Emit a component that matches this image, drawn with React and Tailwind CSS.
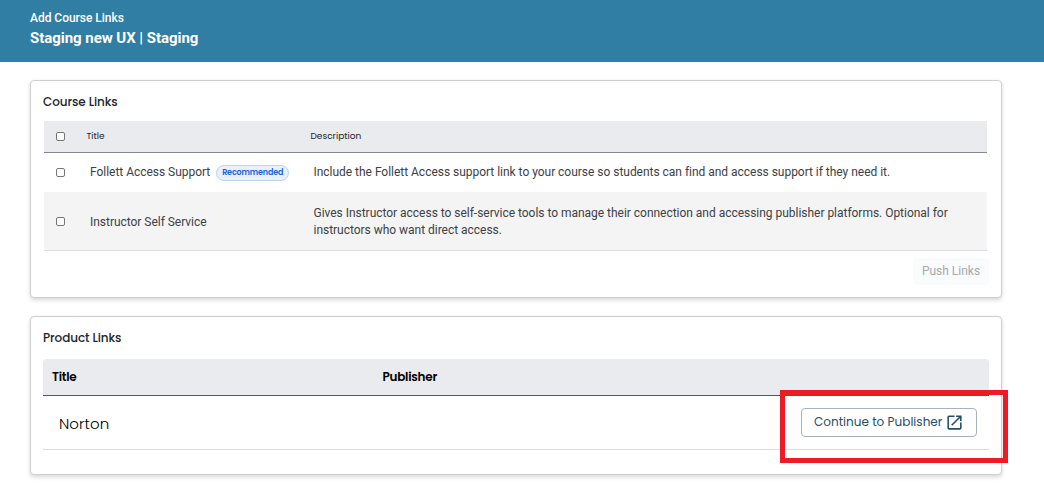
import { MdOpenInNew } from 'react-icons/md';

const courseLinks = [
  {
    title: 'Follett Access Support',
    recommended: true,
    description:
      'Include the Follett Access support link to your course so students can find and access support if they need it.',
    rowClass: 'h-[39px] bg-white',
    titleClass: '',
    textClass: '',
  },
  {
    title: 'Instructor Self Service',
    recommended: false,
    description:
      'Gives Instructor access to self-service tools to manage their connection and accessing publisher platforms. Optional for instructors who want direct access.',
    rowClass: 'h-[59px] bg-[#f4f4f4] border-b border-[#dcdde4]',
    titleClass: 'pt-0.5',
    textClass: 'pt-px',
  },
];

function Checkbox({ label }) {
  return (
    <input
      type="checkbox"
      aria-label={label}
      className="block w-[9px] h-[9px] ml-3 appearance-none rounded-[2px] border border-[#767676] bg-white"
    />
  );
}

function Card({ title, className, children }) {
  return (
    <section
      className={`w-[972px] rounded-[4px] border border-[#cfcfcf] bg-white pl-3 shadow-[0_2px_4px_rgba(0,0,0,0.16)] ${className}`}
    >
      <h2 className="h-10 pt-[11px] font-[Poppins,Inter,sans-serif] text-[12px] leading-5 font-medium tracking-[-0.08px] text-[#212529]">
        {title}
      </h2>
      {children}
    </section>
  );
}

export default function App() {
  return (
    <div className="relative w-[1044px] h-[486px] overflow-hidden bg-white font-[Roboto,sans-serif] text-[#3c4146]">
      <header className="h-[62px] bg-[#307ea3] pl-[30px] pt-[9px] text-white">
        <p className="text-[12px] leading-[18px] font-medium tracking-[-0.03px]">Add Course Links</p>
        <h1 className="text-[15px] leading-[22px] font-bold tracking-[-0.04px]">Staging new UX | Staging</h1>
      </header>

      <main className="flex flex-col gap-[18px] pl-[30px] pt-[18px]">
        <Card title="Course Links" className="h-[218px]">
          <div className="ml-px w-[943px]">
            <div className="grid h-8 grid-cols-[42.5px_224px_1fr] items-center border-b border-[#85888e] bg-[#eaebef] font-[Poppins,Inter,sans-serif] text-[9px] text-[#212529]">
              <Checkbox label="Select all" />
              <span>Title</span>
              <span>Description</span>
            </div>
            {courseLinks.map((link) => (
              <div
                key={link.title}
                className={`grid grid-cols-[46px_223.5px_1fr] items-center text-[12px] leading-[17px] ${link.rowClass}`}
              >
                <Checkbox label={link.title} />
                <div className="flex items-center tracking-[-0.03px]">
                  <span className={link.titleClass}>{link.title}</span>
                  {link.recommended && (
                    <span className="ml-1.5 h-4 w-[73px] rounded-full border border-[#bfd3f2] bg-[#e8f0fb] text-center font-[Poppins,Inter,sans-serif] text-[8px] leading-[14px] font-semibold tracking-[-0.15px] text-[#1763d6]">
                      Recommended
                    </span>
                  )}
                </div>
                <p className={`w-[650px] tracking-[-0.025px] ${link.textClass}`}>{link.description}</p>
              </div>
            ))}
          </div>
          <div className="flex justify-end pt-[7px] pr-3">
            <button disabled className="h-[27px] w-[76px] rounded-[4px] bg-[#fafbfd] pb-0.5 text-[12px] text-[#a5a9ad]">
              Push Links
            </button>
          </div>
        </Card>

        <Card title="Product Links" className="h-[159px]">
          <div className="w-[946px] pt-0.5">
            <div className="grid h-[37px] grid-cols-[330.5px_1fr] items-center rounded-t-[4px] border-b border-[#54575c] bg-[#eaebef] pl-[9px] font-[Poppins,Inter,sans-serif] text-[12px] font-semibold tracking-[-0.25px] text-black">
              <span>Title</span>
              <span>Publisher</span>
            </div>
            <div className="flex h-[54px] items-center justify-between border-b border-[#dedede] pl-4 pr-3">
              <span className="pt-1 font-[Poppins,Inter,sans-serif] text-[15px] font-light tracking-[0.08px] text-black">
                Norton
              </span>
              <button className="flex h-[29px] w-[176px] items-center rounded-[4px] border border-[#a9b2b9] bg-white pl-3 font-[Poppins,Inter,sans-serif] text-[12px] text-[#234f68]">
                <span className="w-[131px] pb-px text-left tracking-[0.03px] whitespace-nowrap">Continue to Publisher</span>
                <MdOpenInNew className="size-[19px]" />
              </button>
            </div>
          </div>
        </Card>
      </main>

      {/* highlight around the publisher button */}
      <div className="pointer-events-none absolute left-[780px] top-[390px] h-[73px] w-[228px] border-[5px] border-[#ed1c24]" />
    </div>
  );
}
